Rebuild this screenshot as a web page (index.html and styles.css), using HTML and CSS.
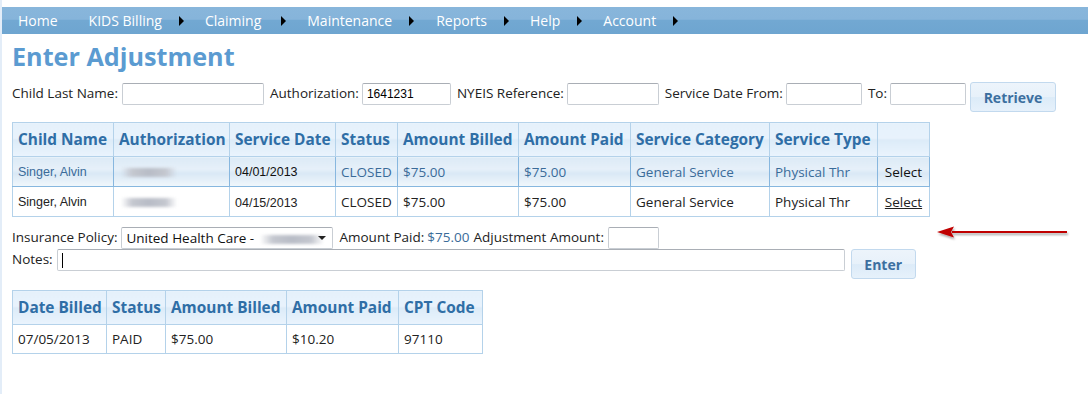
FILE: index.html
```html
<!DOCTYPE html>
<html>
<head>
<meta charset="utf-8">
<link rel="stylesheet" href="styles.css">
</head>
<body>
<div class="page">
  <nav class="nav">
    <span class="nav-item">Home</span>
    <span class="nav-item has-sub">KIDS Billing</span>
    <span class="nav-item has-sub">Claiming</span>
    <span class="nav-item has-sub">Maintenance</span>
    <span class="nav-item has-sub">Reports</span>
    <span class="nav-item has-sub">Help</span>
    <span class="nav-item has-sub">Account</span>
  </nav>
  <main class="content">
    <h1 class="title">Enter Adjustment</h1>
    <div class="search-row">
      <label class="lbl">Child Last Name:</label><span class="input w-name"></span>
      <label class="lbl">Authorization:</label><span class="input w-auth">1641231</span>
      <label class="lbl">NYEIS Reference:</label><span class="input w-nyeis"></span>
      <label class="lbl">Service Date From:</label><span class="input w-date"></span>
      <label class="lbl">To:</label><span class="input w-date"></span>
      <button class="btn btn-retrieve">Retrieve</button>
    </div>

    <table class="grid grid-main">
      <colgroup>
        <col style="width:101px"><col style="width:116px"><col style="width:106px">
        <col style="width:62px"><col style="width:121px"><col style="width:112px">
        <col style="width:139px"><col style="width:108px"><col style="width:52px">
      </colgroup>
      <thead>
        <tr>
          <th>Child Name</th>
          <th>Authorization</th>
          <th>Service Date</th>
          <th>Status</th>
          <th>Amount Billed</th>
          <th>Amount Paid</th>
          <th>Service Category</th>
          <th>Service Type</th>
          <th></th>
        </tr>
      </thead>
      <tbody>
        <tr class="selected">
          <td class="arial">Singer, Alvin</td>
          <td><span class="blur"></span></td>
          <td class="arial dark">04/01/2013</td>
          <td>CLOSED</td>
          <td>$75.00</td>
          <td>$75.00</td>
          <td>General Service</td>
          <td>Physical Thr</td>
          <td class="center dark">Select</td>
        </tr>
        <tr>
          <td class="arial">Singer, Alvin</td>
          <td><span class="blur"></span></td>
          <td class="arial date2">04/15/2013</td>
          <td>CLOSED</td>
          <td>$75.00</td>
          <td>$75.00</td>
          <td>General Service</td>
          <td>Physical Thr</td>
          <td class="center"><a class="link">Select</a></td>
        </tr>
      </tbody>
    </table>

    <div class="adjust-area">
      <div class="adjust-fields">
        <div class="adj-row">
          <label class="lbl">Insurance Policy:</label>
          <span class="select">United Health Care - <span class="blur blur-sm"></span><span class="caret"></span></span>
          <label class="lbl">Amount Paid:</label><span class="val">$75.00</span>
          <label class="lbl">Adjustment Amount:</label><span class="input w-adj"></span>
        </div>
        <div class="adj-row">
          <label class="lbl">Notes:</label>
          <span class="input w-notes"><span class="cursor"></span></span>
          <button class="btn btn-enter">Enter</button>
        </div>
      </div>
      <svg class="arrow" width="140" height="20" viewBox="0 0 140 20">
        <defs>
          <filter id="sh" x="-10%" y="-50%" width="120%" height="200%">
            <feDropShadow dx="1" dy="2" stdDeviation="1.2" flood-color="#000" flood-opacity="0.35"/>
          </filter>
        </defs>
        <g filter="url(#sh)">
          <line x1="133" y1="8" x2="18" y2="8" stroke="#c00000" stroke-width="2.2"/>
          <polygon points="3,8 20,2.5 17,8 20,13.5" fill="#c00000"/>
        </g>
      </svg>
    </div>

    <table class="grid grid-sub">
      <colgroup>
        <col style="width:94px"><col style="width:59px"><col style="width:121px">
        <col style="width:112px"><col style="width:84px">
      </colgroup>
      <thead>
        <tr>
          <th>Date Billed</th>
          <th>Status</th>
          <th>Amount Billed</th>
          <th>Amount Paid</th>
          <th>CPT Code</th>
        </tr>
      </thead>
      <tbody>
        <tr>
          <td>07/05/2013</td>
          <td>PAID</td>
          <td>$75.00</td>
          <td>$10.20</td>
          <td>97110</td>
        </tr>
      </tbody>
    </table>
  </main>
</div>
</body>
</html>
```

FILE: styles.css
```css
html, body {
  margin: 0;
  padding: 0;
  background: #ffffff;
}

body {
  font-family: "Open Sans", "DejaVu Sans", sans-serif;
  font-size: 13.5px;
  color: #222;
}

.page {
  border-left: 2px solid #e3edf8;
  min-height: 394px;
  box-sizing: border-box;
  padding-top: 7px;
}

.nav {
  height: 27px;
  background: linear-gradient(#88b6db 0%, #86b4da 45%, #72a8d2 50%, #6ea5d0 100%);
  display: flex;
  align-items: center;
  padding-left: 16px;
  font-size: 14px;
  color: #ffffff;
}

.nav-item {
  display: flex;
  align-items: center;
  margin-right: 21px;
}

.nav-item:first-child {
  margin-right: 31px;
}

.nav-item:nth-child(4) {
  margin-right: 22px;
}

.nav-item.has-sub::after {
  content: "";
  display: inline-block;
  width: 0;
  height: 0;
  border-top: 5px solid transparent;
  border-bottom: 5px solid transparent;
  border-left: 5px solid #000;
  margin-left: 17px;
}

.nav-item:nth-child(3)::after {
  margin-left: 20px;
}

.content {
  padding-left: 10px;
}

.title {
  margin: 5px 0 0 0;
  font-size: 25.2px;
  font-weight: bold;
  color: #5b9bd1;
  line-height: 34px;
}

.search-row {
  display: flex;
  align-items: flex-start;
  margin-top: 10px;
  height: 29px;
}

.lbl {
  color: #222;
  line-height: 21px;
  margin-right: 3px;
  white-space: nowrap;
}

.input {
  display: inline-block;
  box-sizing: border-box;
  height: 22px;
  border: 1px solid #c9ced4;
  border-top-color: #a9aeb5;
  border-radius: 2px;
  background: #fff;
  margin-right: 6px;
  padding: 2px 4px;
  line-height: 16px;
  font-family: "Liberation Sans", Arial, sans-serif;
  font-size: 12px;
  color: #000;
}

.w-name { width: 142px; margin-left: 1px; }
.w-auth { width: 89px; }
.w-nyeis { width: 92px; }
.w-date { width: 76px; }
.w-adj { width: 51px; margin-left: 1px; }
.w-notes { width: 788px; margin-left: 1px; }

.cursor {
  display: inline-block;
  width: 1px;
  height: 15px;
  background: #000;
  vertical-align: middle;
}

.btn {
  box-sizing: border-box;
  border: 1px solid #c2d9ee;
  border-radius: 3px;
  background: linear-gradient(#edf4fb 0%, #e7f1fa 50%, #dcebf8 52%, #e6f1fb 100%);
  color: #3c6f9f;
  font-family: "Open Sans", "DejaVu Sans", sans-serif;
  font-weight: bold;
  font-size: 14px;
  padding: 0;
  cursor: pointer;
}

.btn-retrieve {
  width: 86px;
  height: 30px;
  margin-top: -1px;
  margin-left: -2px;
}

.btn-enter {
  width: 65px;
  height: 30px;
  margin-left: 0;
}

.grid {
  border-collapse: collapse;
  border: 1px solid #a8cbe6;
  table-layout: fixed;
}

.grid-main {
  width: 918px;
  margin-top: 10px;
}

.grid-sub {
  width: 471px;
  margin-top: 0;
}

.grid th {
  height: 33px;
  padding: 0 5px;
  text-align: left;
  font-size: 15.4px;
  font-weight: bold;
  color: #2f6ea6;
  white-space: nowrap;
  overflow: hidden;
  border: 1px solid #b4d2ea;
  background: linear-gradient(#e5f1fb 0%, #e8f2fc 45%, #dcebf8 50%, #eaf4fd 100%);
}

.grid td {
  padding: 0 5px;
  font-size: 13.5px;
  white-space: nowrap;
  overflow: hidden;
  color: #222;
  border: 1px solid #b4d2ea;
}

.grid-main td {
  height: 29px;
}

.grid-main tr.selected td {
  color: #3a6b99;
  background: linear-gradient(#dceaf6 0%, #e6f0f9 40%, #d9e8f5 55%, #f1f7fc 100%);
  border-color: #87b7df;
  border-left-color: #b4d2ea;
}

.grid-main tr.selected td.dark {
  color: #111;
}

.grid-main td.arial {
  font-family: "Liberation Sans", Arial, sans-serif;
  font-size: 12.5px;
}

.grid-main td.date2 {
  padding-top: 3px;
  height: 26px;
}

.center {
  text-align: center;
}

.link {
  color: #222;
  text-decoration: underline;
}

.blur {
  display: inline-block;
  width: 56px;
  height: 9px;
  vertical-align: middle;
  background: linear-gradient(90deg, rgba(200,200,210,0) 0%, #c4c7cf 20%, #b8bcc6 50%, #c4c7cf 80%, rgba(200,200,210,0) 100%);
  filter: blur(1.5px);
  margin-left: 2px;
}

.blur-sm {
  width: 64px;
}

.adjust-area {
  display: flex;
  align-items: flex-start;
  margin-top: 10px;
}

.adjust-fields {
  display: flex;
  flex-direction: column;
}

.adj-row {
  display: flex;
  align-items: flex-start;
  height: 22px;
}

.adj-row + .adj-row {
  height: 41px;
}

.select {
  position: relative;
  display: inline-block;
  box-sizing: border-box;
  width: 212px;
  height: 22px;
  border: 1px solid #c9ced4;
  border-top-color: #a9aeb5;
  border-radius: 2px;
  padding: 1px 4px;
  margin-left: 1px;
  margin-right: 6px;
  line-height: 18px;
  font-size: 13.5px;
  color: #111;
  white-space: nowrap;
}

.caret {
  position: absolute;
  right: 6px;
  top: 8px;
  width: 0;
  height: 0;
  border-left: 4px solid transparent;
  border-right: 4px solid transparent;
  border-top: 4px solid #222;
}

.val {
  color: #3a6b99;
  line-height: 21px;
  margin-right: 4px;
}

.arrow {
  margin-left: 18px;
  margin-top: -3px;
}

.grid-sub td {
  height: 28px;
}
```
